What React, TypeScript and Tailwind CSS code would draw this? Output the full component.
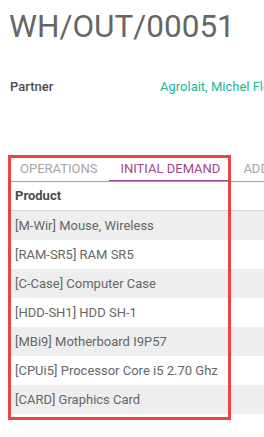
const products = [
  "[M-Wir] Mouse, Wireless",
  "[RAM-SR5] RAM SR5",
  "[C-Case] Computer Case",
  "[HDD-SH1] HDD SH-1",
  "[MBi9] Motherboard I9P57",
  "[CPUi5] Processor Core i5 2.70 Ghz",
  "[CARD] Graphics Card",
];

export default function App() {
  return (
    <div
      className="relative w-[264px] h-[437px] overflow-hidden bg-white"
      style={{ fontFamily: "Roboto, 'Liberation Sans', sans-serif" }}
    >
      <h1 className="ml-[9px] mt-[11px] text-[31.5px] leading-[32px] text-[#666666] whitespace-nowrap">
        WH/OUT/00051
      </h1>

      <div className="flex mt-[34px] h-[20px] items-center text-[13px] leading-[20px] whitespace-nowrap">
        <span className="pl-[10px] w-[160px] shrink-0 font-medium text-[#4c4c4c]">Partner</span>
        <span className="text-[#21b799]">Agrolait, Michel Fletcher</span>
      </div>

      <div className="ml-[8px] mt-[60px] flex border-b border-[#9e9e9e] text-[13px] uppercase whitespace-nowrap">
        <div className="h-[24px] px-[12px] flex items-center text-[#a5a5a5]">Operations</div>
        <div className="h-[24px] px-[11px] flex items-center text-[#a2458a] border-b border-[#a2458a] -mb-px">
          Initial Demand
        </div>
        <div className="h-[24px] px-[12px] flex items-center text-[#a5a5a5]">Additional Info</div>
      </div>

      <div className="ml-[8px] text-[13px] whitespace-nowrap">
        <div className="h-[29px] flex items-center pl-[7px] border-b border-[#d6d6d6] font-bold text-[#4c4c4c]">
          Product
        </div>
        {products.map((p, i) => (
          <div
            key={p}
            className={`h-[29px] flex items-center pl-[7px] text-[#666666] ${i % 2 === 0 ? "bg-[#eeeeee]" : "bg-white"}`}
          >
            {p}
          </div>
        ))}
      </div>

      <div className="absolute left-[8px] top-[155px] w-[223px] h-[265px] border-[3px] border-[#e8473f] pointer-events-none" />
    </div>
  );
}
